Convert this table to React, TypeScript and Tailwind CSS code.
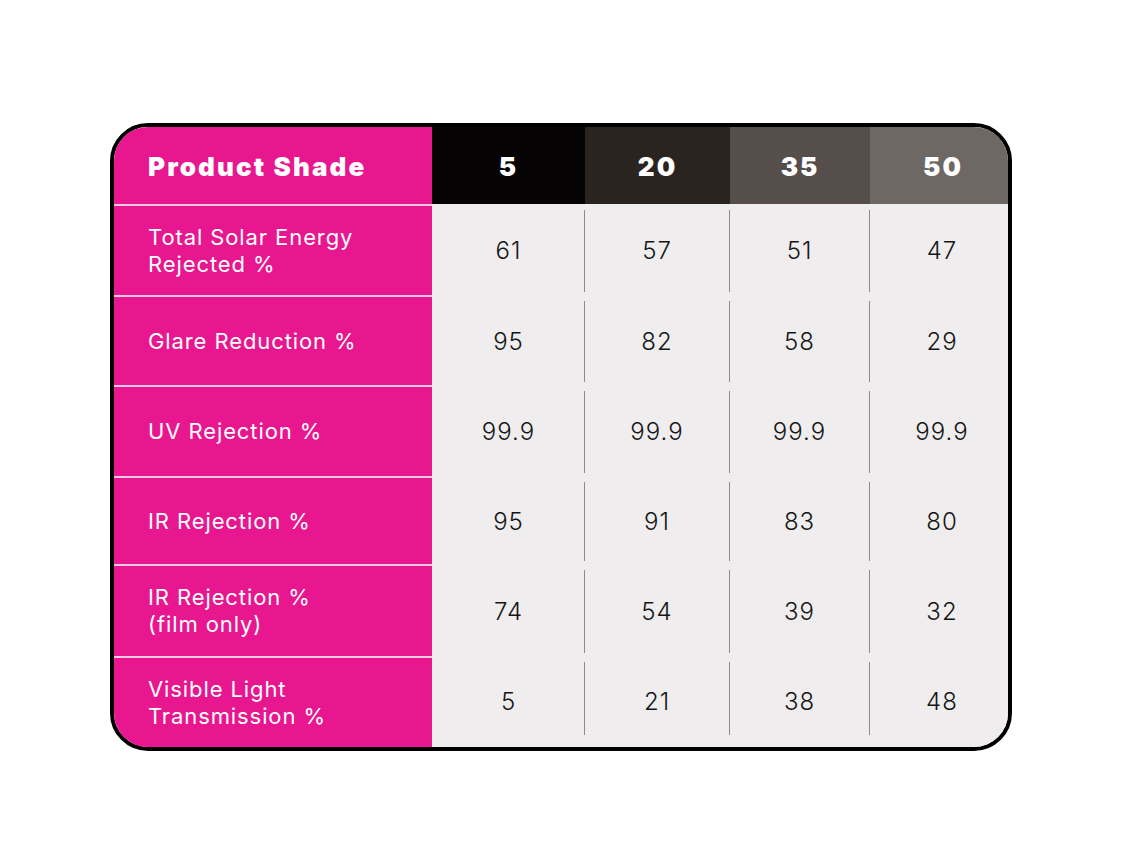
import React from "react";

const headerCols = [
  { label: "5", bg: "bg-[#050303]", extra: "" },
  { label: "20", bg: "bg-[#2a2421]", extra: "" },
  { label: "35", bg: "bg-[#554e4b]", extra: "" },
  { label: "50", bg: "bg-[#6e6864]", extra: "pl-[8px]" },
];

const rows: { label: string[]; values: string[]; h: string }[] = [
  { label: ["Total Solar Energy", "Rejected %"], values: ["61", "57", "51", "47"], h: "h-[91px]" },
  { label: ["Glare Reduction %"], values: ["95", "82", "58", "29"], h: "h-[90px]" },
  { label: ["UV Rejection %"], values: ["99.9", "99.9", "99.9", "99.9"], h: "h-[91px]" },
  { label: ["IR Rejection %"], values: ["95", "91", "83", "80"], h: "h-[88px]" },
  { label: ["IR Rejection %", "(film only)"], values: ["74", "54", "39", "32"], h: "h-[92px]" },
  { label: ["Visible Light", "Transmission %"], values: ["5", "21", "38", "48"], h: "h-[91px]" },
];

const font = { fontFamily: "Inter, 'Noto Sans', sans-serif" };

export default function App() {
  return (
    <div className="w-[1130px] h-[855px] bg-white pt-[123px] pl-[110px]" style={font}>
      <div className="w-[902px] border-4 border-black rounded-[38px] overflow-hidden">
        <div className="grid grid-cols-[318px_153px_145px_140px_138px] h-[77px]">
          <div className="bg-[#e8168f] flex items-center pl-[34px] pt-[2px] text-white text-[26px] font-black tracking-[2.1px]">
            Product Shade
          </div>
          {headerCols.map((c) => (
            <div
              key={c.label}
              className={`${c.bg} ${c.extra} flex items-center justify-center pt-[2px] text-white text-[26px] font-black tracking-[2px]`}
            >
              {c.label}
            </div>
          ))}
        </div>
        {rows.map((r, ri) => {
          const last = ri === rows.length - 1;
          return (
            <div key={ri} className={`grid grid-cols-[318px_153px_145px_140px_138px] ${r.h}`}>
              <div className="bg-[#e8168f] border-t-2 border-[#f7c8e2] flex flex-col justify-center pl-[34px] text-white text-[22px] leading-[27px] font-normal tracking-[0.9px]">
                {r.label.map((l) => (
                  <span key={l} className="whitespace-nowrap">{l}</span>
                ))}
              </div>
              {r.values.map((v, vi) => (
                <div
                  key={vi}
                  className={`bg-[#efedee] flex pt-[6px] ${last ? "pb-[12px]" : "pb-[3px]"} ${vi === 0 ? "border-l border-[#f6e9f0]" : ""}`}
                >
                  <div
                    className={`flex-1 flex items-center justify-center text-[#151515] text-[24px] font-light tracking-[1px] ${
                      vi < 3 ? "border-r border-[#8c8c8c]" : "pl-[6px]"
                    } ${last ? "pt-[6px]" : ""}`}
                  >
                    {v}
                  </div>
                </div>
              ))}
            </div>
          );
        })}
      </div>
    </div>
  );
}
